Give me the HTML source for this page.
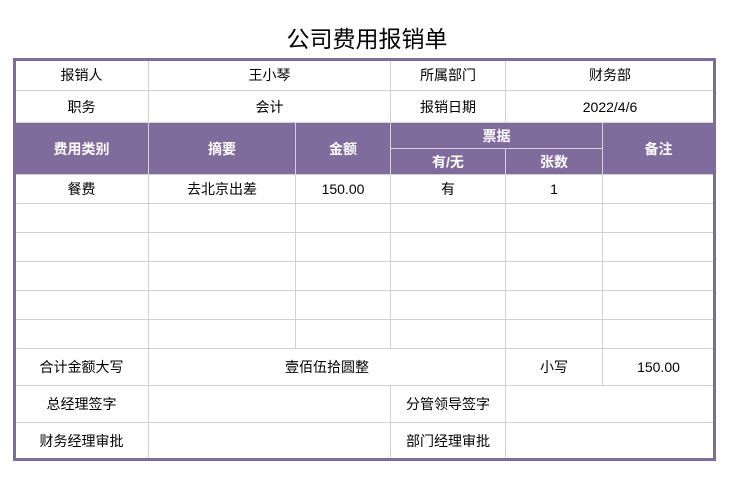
<!DOCTYPE html>
<html><head><meta charset="utf-8"><style>
body{margin:0;width:734px;height:488px;background:#fff;position:relative;font-family:"Liberation Sans","Noto Sans CJK SC",sans-serif;font-size:14px;color:#000;overflow:hidden}
.c{position:absolute;box-sizing:border-box;border:1px solid #d0d0d0;display:flex;align-items:center;justify-content:center;margin:-1px 0 0 -1px}
.h{background:#806b9d;color:#fff;font-weight:bold;border-color:#d8d0e0}
.t{position:absolute;left:0;width:734px;top:20px;text-align:center;font-size:23px}
.f{position:absolute;left:13px;top:58px;width:703px;height:403px;box-sizing:border-box;border:3px solid #806b9d}
</style></head><body>
<div class="t">公司费用报销单</div>
<div id="g"></div>
<div class="f"></div>
<script>
const C=[
[15,149,60,91,'报销人'],[149,391,60,91,'王小琴'],[391,506,60,91,'所属部门'],[506,715,60,91,'财务部'],
[15,149,91,123,'职务'],[149,391,91,123,'会计'],[391,506,91,123,'报销日期'],[506,715,91,123,'2022/4/6'],
[15,149,123,175,'费用类别',1],[149,296,123,175,'摘要',1],[296,391,123,175,'金额',1],[391,603,123,149,'票据',1],[391,506,149,175,'有/无',1],[506,603,149,175,'张数',1],[603,715,123,175,'备注',1],
[15,149,349,386,'合计金额大写'],[149,506,349,386,'壹佰伍拾圆整'],[506,603,349,386,'小写'],[603,715,349,386,'150.00'],
[15,149,386,423,'总经理签字'],[149,391,386,423,''],[391,506,386,423,'分管领导签字'],[506,715,386,423,''],
[15,149,423,460,'财务经理审批'],[149,391,423,460,''],[391,506,423,460,'部门经理审批'],[506,715,423,460,'']];
const ys=[175,204,233,262,291,320,349],xs=[15,149,296,391,506,603,715];
const d=['餐费','去北京出差','150.00','有','1',''];
for(let r=0;r<6;r++)for(let k=0;k<6;k++)C.push([xs[k],xs[k+1],ys[r],ys[r+1],r==0?d[k]:'']);
let h='';for(const [a,b,y,z,s,p] of C){h+=`<div class="c${p?' h':''}" style="left:${a}px;top:${y}px;width:${b-a+1}px;height:${z-y+1}px">${s}</div>`}
document.getElementById('g').innerHTML=h;
</script>
</body></html>
